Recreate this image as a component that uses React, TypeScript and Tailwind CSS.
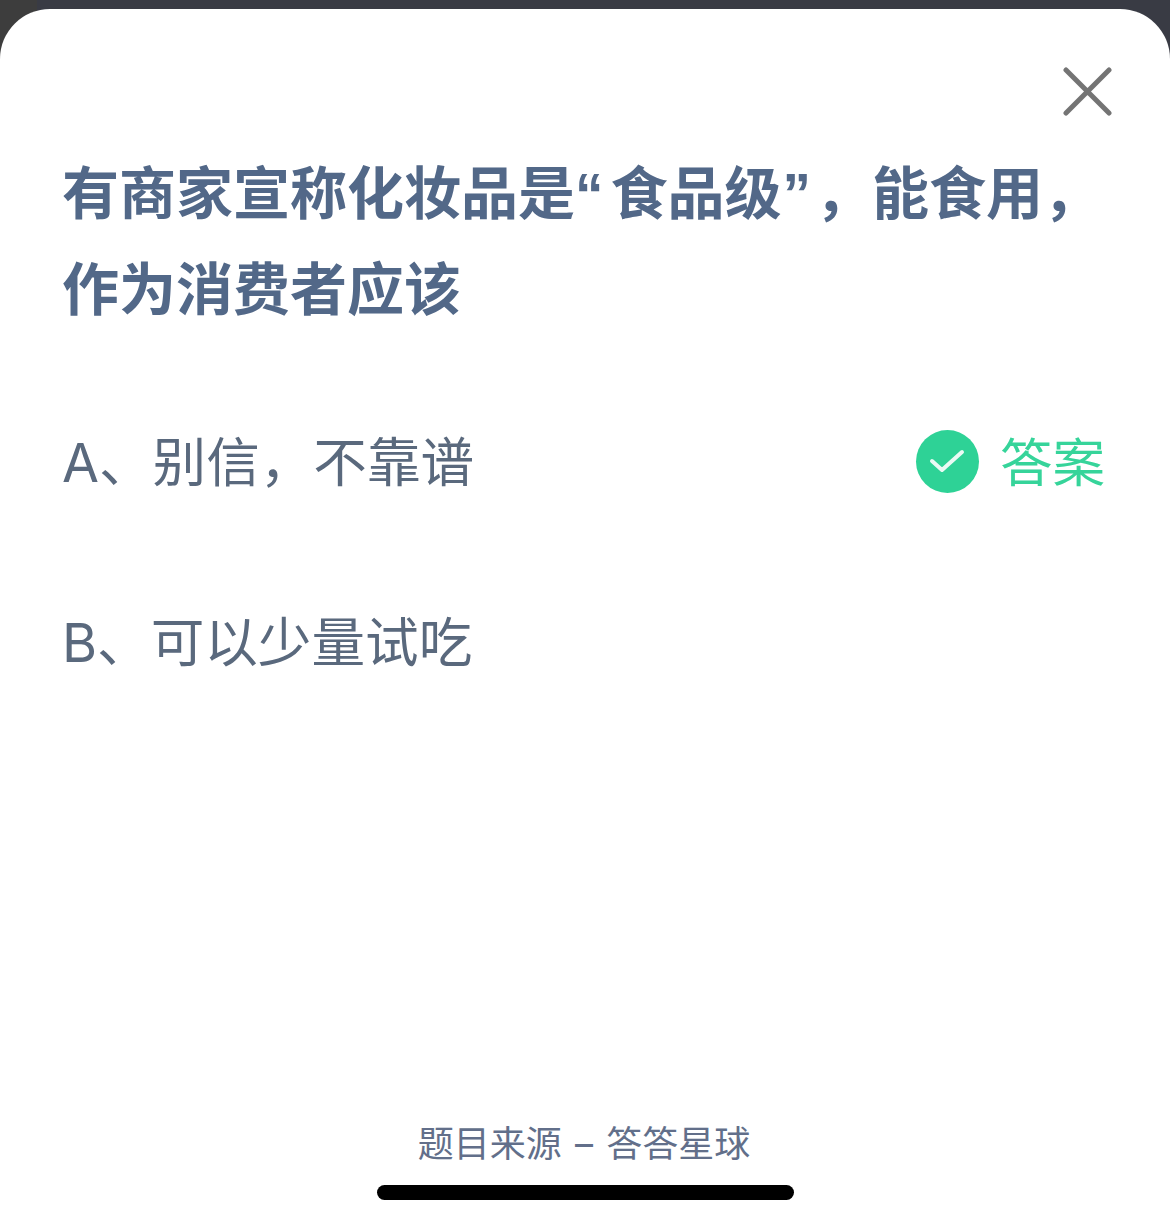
const font = { fontFamily: '"Inter", "Noto Sans CJK SC", sans-serif' };

export default function App() {
  return (
    <div className="h-[1224px] w-[1170px] overflow-hidden bg-[linear-gradient(90deg,#3d3d3d_37px,#393b44_37px)] pt-[9px]" style={font}>
      <div className="flex h-[1215px] flex-col rounded-t-[50px] bg-white">
        <div className="flex justify-end pr-[58px] pt-[58px]">
          <svg width="49" height="49" viewBox="0 0 49 49" fill="none" stroke="#747474" strokeWidth="5" strokeLinecap="round">
            <path d="M3 3 L46 46 M46 3 L3 46" />
          </svg>
        </div>
        <h1 className="ml-[62px] mt-[30px] text-[57px] leading-[95px] font-semibold whitespace-nowrap text-[#526888]">
          有商家宣称化妆品是<span className="mr-[7px] font-['Liberation_Sans']">“</span>食品级<span className="ml-[1px] mr-[4px] font-['Liberation_Sans']">”</span>，能食用，
          <br />
          作为消费者应该
        </h1>
        <div className="mt-[94px] ml-[62px] mr-[65px] flex h-[60px] items-center justify-between text-[53.6px] text-[#5a697d]">
          <span className="pt-[4px]">A、别信，不靠谱</span>
          <div className="flex items-center gap-[21px] text-[#36d49a]">
            <div className="ml-[1px] flex h-[63px] w-[63px] items-center justify-center rounded-full bg-[#2ed296]">
              <svg width="36" height="28" viewBox="0 0 36 28" fill="none" stroke="#eafaf4" strokeWidth="4" strokeLinecap="round" strokeLinejoin="round">
                <path d="M3 14 L13 23 L33 5" />
              </svg>
            </div>
            <span className="pt-[4px] text-[52.5px]">答案</span>
          </div>
        </div>
        <div className="mt-[121px] ml-[62px] flex h-[60px] items-center text-[53.6px] text-[#5a697d]">
          <span className="pt-[2px]">B、可以少量试吃</span>
        </div>
        <div className="mt-auto flex flex-col items-center pb-[24px]">
          <div className="mr-[2px] text-[36px] leading-[50px] text-[#626f8a]">
            题目来源<span className="mx-[3px]"> – </span>答答星球
          </div>
          <div className="mt-[16px] h-[15px] w-[417px] rounded-full bg-black" />
        </div>
      </div>
    </div>
  );
}
